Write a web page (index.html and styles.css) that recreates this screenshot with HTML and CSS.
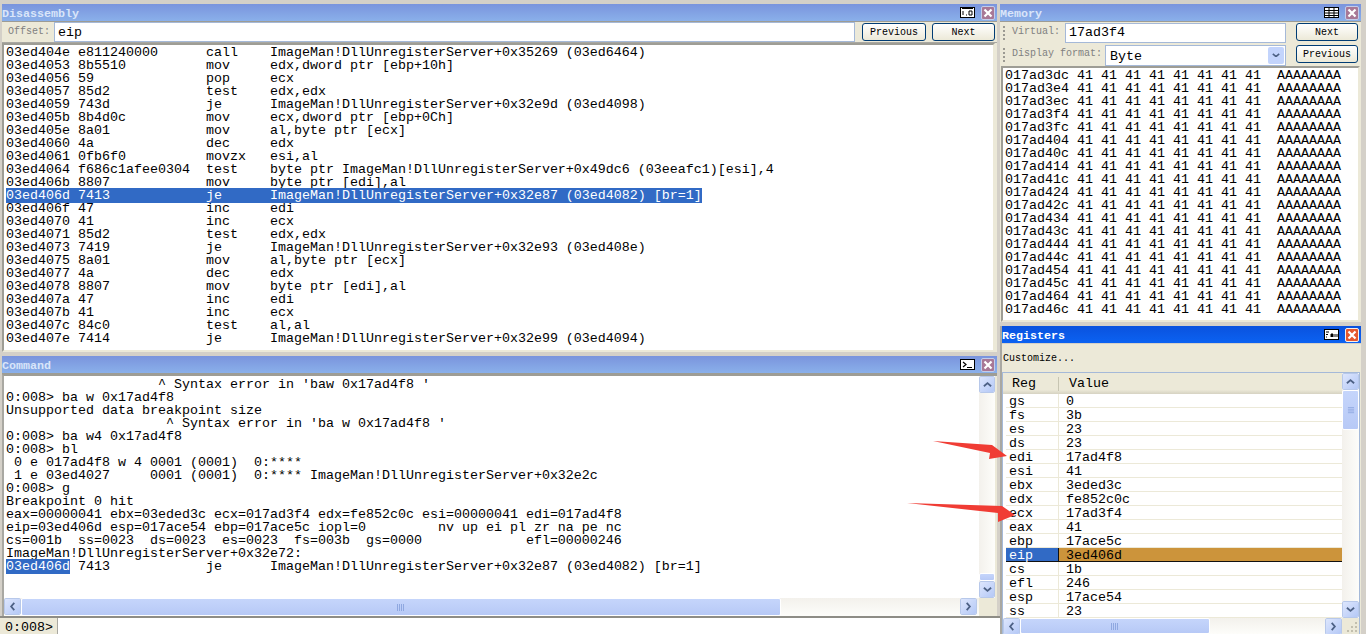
FILE: index.html
```html
<!DOCTYPE html>
<html lang="en">
<head>
<meta charset="utf-8">
<title>WinDbg</title>
<link rel="stylesheet" href="styles.css">
</head>
<body>
<div class="app">
  <div class="col col-left">
    <section class="panel panel-dis">
      <header class="title"><span>Disassembly</span><svg class="ico" viewBox="0 0 15 11"><rect x=".5" y=".5" width="14" height="10" fill="#fff" stroke="#000"/><path d="M2 1.5h11M3 4v4M6 8h1M9 4h3v4H9z" stroke="#000" fill="none"/></svg><b class="close inactive"><svg viewBox="0 0 10 10"><path d="M1.5 1.5l7 7M8.5 1.5l-7 7" stroke="#fff" stroke-width="2.2"/></svg></b></header>
      <div class="bar">
        <label class="lbl lbl-off">Offset:</label>
        <div class="field field-dis">eip</div>
        <button class="btn btn-prev">Previous</button>
        <button class="btn btn-next">Next</button>
      </div>
      <pre class="view view-dis">03ed404e e811240000      call    ImageMan!DllUnregisterServer+0x35269 (03ed6464)
03ed4053 8b5510          mov     edx,dword ptr [ebp+10h]
03ed4056 59              pop     ecx
03ed4057 85d2            test    edx,edx
03ed4059 743d            je      ImageMan!DllUnregisterServer+0x32e9d (03ed4098)
03ed405b 8b4d0c          mov     ecx,dword ptr [ebp+0Ch]
03ed405e 8a01            mov     al,byte ptr [ecx]
03ed4060 4a              dec     edx
03ed4061 0fb6f0          movzx   esi,al
03ed4064 f686c1afee0304  test    byte ptr ImageMan!DllUnregisterServer+0x49dc6 (03eeafc1)[esi],4
03ed406b 8807            mov     byte ptr [edi],al
<span class="sel">03ed406d 7413            je      ImageMan!DllUnregisterServer+0x32e87 (03ed4082) [br=1]</span>
03ed406f 47              inc     edi
03ed4070 41              inc     ecx
03ed4071 85d2            test    edx,edx
03ed4073 7419            je      ImageMan!DllUnregisterServer+0x32e93 (03ed408e)
03ed4075 8a01            mov     al,byte ptr [ecx]
03ed4077 4a              dec     edx
03ed4078 8807            mov     byte ptr [edi],al
03ed407a 47              inc     edi
03ed407b 41              inc     ecx
03ed407c 84c0            test    al,al
03ed407e 7414            je      ImageMan!DllUnregisterServer+0x32e99 (03ed4094)</pre>
    </section>
    <section class="panel panel-cmd">
      <header class="title"><span>Command</span><svg class="ico" viewBox="0 0 15 11"><rect x=".5" y=".5" width="14" height="10" fill="#fff" stroke="#000" stroke-width="1"/><path d="M3 3l3 2.5L3 8M7 8.5h5" stroke="#000" stroke-width="1.2" fill="none"/></svg><b class="close inactive"><svg viewBox="0 0 10 10"><path d="M1.5 1.5l7 7M8.5 1.5l-7 7" stroke="#fff" stroke-width="2.2"/></svg></b></header>
      <div class="cmd-body">
        <pre class="view view-cmd">                   ^ Syntax error in 'baw 0x17ad4f8 '
0:008&gt; ba w 0x17ad4f8
Unsupported data breakpoint size
                    ^ Syntax error in 'ba w 0x17ad4f8 '
0:008&gt; ba w4 0x17ad4f8
0:008&gt; bl
 0 e 017ad4f8 w 4 0001 (0001)  0:****
 1 e 03ed4027     0001 (0001)  0:**** ImageMan!DllUnregisterServer+0x32e2c
0:008&gt; g
Breakpoint 0 hit
eax=00000041 ebx=03eded3c ecx=017ad3f4 edx=fe852c0c esi=00000041 edi=017ad4f8
eip=03ed406d esp=017ace54 ebp=017ace5c iopl=0         nv up ei pl zr na pe nc
cs=001b  ss=0023  ds=0023  es=0023  fs=003b  gs=0000             efl=00000246
ImageMan!DllUnregisterServer+0x32e72:
<span class="sel">03ed406d</span> 7413            je      ImageMan!DllUnregisterServer+0x32e87 (03ed4082) [br=1]</pre>
        <div class="vscroll vscroll-cmd">
          <i class="sb up"><svg viewBox="0 0 10 6"><path d="M1 5l4-3.5L9 5" fill="none" stroke="#4d6185" stroke-width="2"/></svg></i>
          <i class="track"></i>
          <i class="thumb-v thumb-mini"></i>
          <i class="sb"><svg viewBox="0 0 10 6"><path d="M1 1l4 3.500L9 1" fill="none" stroke="#4d6185" stroke-width="2"/></svg></i>
        </div>
        <div class="hscroll hscroll-cmd">
          <i class="sb"><svg viewBox="0 0 6 10"><path d="M5 1L1.500 5 5 9" fill="none" stroke="#4d6185" stroke-width="2"/></svg></i>
          <i class="thumb-h thumb-cmd"><svg viewBox="0 0 8 7" class="grip"><path d="M.5 0v7M2.500 0v7M4.500 0v7M6.500 0v7" stroke="#8fa8e0"/></svg></i>
          <i class="track"></i>
          <i class="sb"><svg viewBox="0 0 6 10"><path d="M1 1l3.500 4L1 9" fill="none" stroke="#4d6185" stroke-width="2"/></svg></i>
        </div>
        <i class="corner"></i>
      </div>
      <div class="prompt"><span class="prompt-lbl">0:008&gt;</span><div class="prompt-in"></div></div>
    </section>
  </div>

  <div class="col col-right">
    <section class="panel panel-mem">
      <header class="title"><span>Memory</span><svg class="ico" viewBox="0 0 15 11"><rect x=".5" y=".5" width="14" height="10" fill="#fff" stroke="#000"/><path d="M1 3.500h13M1 6h13M1 8.500h13M5 1v9M10 1v9" stroke="#000"/></svg><b class="close inactive"><svg viewBox="0 0 10 10"><path d="M1.500 1.500l7 7M8.500 1.500l-7 7" stroke="#fff" stroke-width="2.200"/></svg></b></header>
      <div class="bar bar-mem">
        <i class="gripper"></i><label class="lbl lbl-virt">Virtual:</label>
        <div class="field field-mem">17ad3f4</div>
        <button class="btn btn-mem">Next</button>
      </div>
      <div class="bar bar-mem">
        <i class="gripper"></i><label class="lbl lbl-fmt">Display format:</label>
        <div class="field field-sel">Byte<i class="dd"><svg viewBox="0 0 10 6"><path d="M1 1l4 3.500L9 1" fill="none" stroke="#4d6185" stroke-width="2"/></svg></i></div>
        <button class="btn btn-mem">Previous</button>
      </div>
      <pre class="view view-mem">017ad3dc 41 41 41 41 41 41 41 41  AAAAAAAA
017ad3e4 41 41 41 41 41 41 41 41  AAAAAAAA
017ad3ec 41 41 41 41 41 41 41 41  AAAAAAAA
017ad3f4 41 41 41 41 41 41 41 41  AAAAAAAA
017ad3fc 41 41 41 41 41 41 41 41  AAAAAAAA
017ad404 41 41 41 41 41 41 41 41  AAAAAAAA
017ad40c 41 41 41 41 41 41 41 41  AAAAAAAA
017ad414 41 41 41 41 41 41 41 41  AAAAAAAA
017ad41c 41 41 41 41 41 41 41 41  AAAAAAAA
017ad424 41 41 41 41 41 41 41 41  AAAAAAAA
017ad42c 41 41 41 41 41 41 41 41  AAAAAAAA
017ad434 41 41 41 41 41 41 41 41  AAAAAAAA
017ad43c 41 41 41 41 41 41 41 41  AAAAAAAA
017ad444 41 41 41 41 41 41 41 41  AAAAAAAA
017ad44c 41 41 41 41 41 41 41 41  AAAAAAAA
017ad454 41 41 41 41 41 41 41 41  AAAAAAAA
017ad45c 41 41 41 41 41 41 41 41  AAAAAAAA
017ad464 41 41 41 41 41 41 41 41  AAAAAAAA
017ad46c 41 41 41 41 41 41 41 41  AAAAAAAA</pre>
    </section>
    <section class="panel panel-reg">
      <header class="title title-active"><span>Registers</span><svg class="ico" viewBox="0 0 15 11"><rect x=".5" y=".5" width="14" height="10" fill="#fff" stroke="#000"/><path d="M2 3h3M2 5.500h2M2 8h1M7 8V5h2v3M11 5v3M13 5v3" stroke="#000"/></svg><b class="close"><svg viewBox="0 0 10 10"><path d="M1.500 1.500l7 7M8.500 1.500l-7 7" stroke="#fff" stroke-width="2.200"/></svg></b></header>
      <div class="customize">Customize...</div>
      <div class="reg-box">
        <div class="reg-table">
          <div class="reg-head"><span class="rh-reg">Reg</span><span class="rh-val">Value</span></div>
          <div class="reg-row"><span>gs</span><span>0</span></div>
          <div class="reg-row"><span>fs</span><span>3b</span></div>
          <div class="reg-row"><span>es</span><span>23</span></div>
          <div class="reg-row"><span>ds</span><span>23</span></div>
          <div class="reg-row"><span>edi</span><span>17ad4f8</span></div>
          <div class="reg-row"><span>esi</span><span>41</span></div>
          <div class="reg-row"><span>ebx</span><span>3eded3c</span></div>
          <div class="reg-row"><span>edx</span><span>fe852c0c</span></div>
          <div class="reg-row"><span>ecx</span><span>17ad3f4</span></div>
          <div class="reg-row"><span>eax</span><span>41</span></div>
          <div class="reg-row"><span>ebp</span><span>17ace5c</span></div>
          <div class="reg-row reg-cur"><span>eip</span><span>3ed406d</span></div>
          <div class="reg-row"><span>cs</span><span>1b</span></div>
          <div class="reg-row"><span>efl</span><span>246</span></div>
          <div class="reg-row"><span>esp</span><span>17ace54</span></div>
          <div class="reg-row"><span>ss</span><span>23</span></div>
        </div>
        <div class="vscroll vscroll-reg">
          <i class="sb up"><svg viewBox="0 0 10 6"><path d="M1 5l4-3.500L9 5" fill="none" stroke="#4d6185" stroke-width="2"/></svg></i>
          <i class="thumb-v thumb-reg"><svg viewBox="0 0 7 8" class="grip"><path d="M0 .5h7M0 2.500h7M0 4.500h7M0 6.500h7" stroke="#8fa8e0"/></svg></i>
          <i class="track"></i>
          <i class="sb"><svg viewBox="0 0 10 6"><path d="M1 1l4 3.500L9 1" fill="none" stroke="#4d6185" stroke-width="2"/></svg></i>
        </div>
        <div class="hscroll hscroll-reg">
          <i class="sb"><svg viewBox="0 0 6 10"><path d="M5 1L1.500 5 5 9" fill="none" stroke="#4d6185" stroke-width="2"/></svg></i>
          <i class="thumb-h thumb-rh"><svg viewBox="0 0 8 7" class="grip"><path d="M.5 0v7M2.500 0v7M4.500 0v7M6.500 0v7" stroke="#8fa8e0"/></svg></i>
          <i class="track"></i>
          <i class="sb"><svg viewBox="0 0 6 10"><path d="M1 1l3.500 4L1 9" fill="none" stroke="#4d6185" stroke-width="2"/></svg></i>
        </div>
        <i class="corner corner-grip"><svg viewBox="0 0 12 12"><path d="M9 1h2v2H9zM5 5h2v2H5zM9 5h2v2H9zM1 9h2v2H1zM5 9h2v2H5zM9 9h2v2H9z" fill="#c2bfae"/></svg></i>
      </div>
    </section>
  </div>
</div>
<svg class="arrows" viewBox="0 0 1366 634" aria-hidden="true">
  <path d="M933 441L992 445 1007 456 989 459 990 453z" fill="#f03c34"/>
  <path d="M907 503L1002 506 1015 515 998 522 998 513z" fill="#f03c34"/>
</svg>
</body>
</html>
```
FILE: styles.css
```css
* { box-sizing: border-box; }
html, body { margin: 0; height: 634px; overflow: hidden; }
body { background: #d4d0c8; font: 13.33px/13px "Liberation Mono", "DejaVu Sans Mono", monospace; color: #000; position: relative; }
.app { display: grid; grid-template-columns: 1000px 366px; height: 634px; }
.col { display: flex; flex-direction: column; min-width: 0; }
.col-left { padding: 4px 3px 0 2px; }
.col-right { padding: 4px 5px 0 0; }
.panel { display: flex; flex-direction: column; min-height: 0; background: #ece9d8; }
.panel-dis { height: 348px; }
.panel-cmd { height: 278px; margin: 4px 0 0 -2px; flex: none; padding-left: 2px; background: #d4d0c8; }
.panel-mem { height: 318px; }
.panel-reg { flex: 1; margin-top: 4px; border-left: 2px solid #a9a8a2; }

.title { flex: none; height: 18px; display: flex; align-items: center; gap: 3px; padding-right: 2px; color: #d9e5f9; font: bold 11.67px/18px "Liberation Mono", monospace; background: linear-gradient(#7a94dd, #8ab0ea); border-bottom: 1px solid #9d9c94; }
.title > span { flex: 1; padding-top: 2px; }
.title-active { background: linear-gradient(#0a52de, #0b62f2); color: #fff; border-bottom: 1px solid #d4d0c8; }
.ico { width: 15px; height: 11px; flex: none; margin-right: 3px; }
.close { width: 14px; height: 14px; flex: none; display: flex; align-items: center; justify-content: center; background: #e5582f; border: 1px solid #f5f0ee; border-radius: 2px; }
.close.inactive { background: #a87896; border-color: #c3cdea; }
.close svg { width: 10px; height: 10px; }

.bar { flex: none; height: 21px; display: flex; align-items: center; background: #ece9d8; border-bottom: 1px solid #a9a8a2; }
.lbl { color: #808080; font-size: 10px; line-height: 20px; padding-left: 6px; flex: none; }
.lbl-off { width: 52px; }
.field { height: 20px; background: #fff; border: 1px solid #a5b9d8; font-size: 13.33px; line-height: 18px; padding-left: 3px; flex: 1; min-width: 0; }
.field-dis { padding-top: 1px; }
.btn { height: 18px; padding: 1px 0 0; margin: 0 0 0 3px; font: 10px/14px "Liberation Mono", monospace; color: #000; background: linear-gradient(#fff, #ece9d8); border: 1px solid #003c74; border-radius: 3px; flex: none; }
.btn-prev { width: 64px; margin-left: 7px; }
.btn-next { width: 63px; margin-left: 6px; margin-right: 2px; }

.bar-mem { height: 22px; border-bottom: 0; }
.bar-mem .lbl { margin-top: -2px; }
.gripper { width: 2px; height: 15px; margin-left: 3px; flex: none; background: repeating-linear-gradient(#9b9a92 0 2px, transparent 2px 4px); }
.lbl-virt { width: 60px; padding-left: 7px; }
.lbl-fmt { width: 100px; padding-left: 7px; }
.field-mem, .field-sel { flex: 1; }
.field-sel { position: relative; height: 21px; line-height: 21px; padding-left: 4px; }
.dd { position: absolute; right: 1px; top: 1px; width: 16px; height: 17px; display: flex; align-items: center; justify-content: center; background: #c3d4fc; border-radius: 2px; }
.dd svg { width: 8px; }
.btn-mem { width: 62px; margin: 1px 3px 0 10px; align-self: flex-start; }

.view { margin: 0; background: #fff; font: 13.33px/13px "Liberation Mono", monospace; overflow: hidden; border-style: solid; border-width: 2px; border-color: #9e9d95 #ece9d8 #ece9d8 #9e9d95; }
.view-dis { flex: 1; padding: 1px 0 0 2px; margin-right: 2px; }
.view-mem { flex: 1; padding: 1px 0 0 2px; margin: 0 1px 0 1px; }
.sel { background: #316ac5; color: #fff; }

.cmd-body { flex: none; height: 242px; display: grid; grid-template-columns: 1fr 16px; grid-template-rows: 1fr 18px; background: #ece9d8; padding: 0 2px 0 0; border-left: 2px solid #a9a8a2; border-top: 2px solid #9e9d95; }
.view-cmd { border: 0; padding: 2px 0 0 2px; grid-column: 1; grid-row: 1; }
.vscroll { display: flex; flex-direction: column; background: linear-gradient(90deg, #f3f1ec, #fdfdfa); }
.hscroll { display: flex; background: linear-gradient(#f3f1ec, #fdfdfa); }
.vscroll-cmd { grid-column: 2; grid-row: 1; }
.vscroll-cmd .sb { width: 16px; }
.hscroll-cmd { grid-column: 1; grid-row: 2; padding-right: 2px; }
.corner { background: #ece9d8; display: block; }
.corner-grip svg { display: block; width: 12px; height: 12px; margin: 3px 0 0 4px; }
.sb { flex: none; width: 17px; height: 17px; display: flex; align-items: center; justify-content: center; background: linear-gradient(135deg, #dde6fd, #b4c8f6); border: 1px solid #fff; outline: 1px solid #b7c8ea; outline-offset: -1px; border-radius: 2px; }
.sb svg { width: 9px; height: 9px; }
.track { flex: 1; display: block; }
.thumb-v, .thumb-h { display: flex; align-items: center; justify-content: center; flex: none; background: linear-gradient(#c5d5fb, #b7c9f6); border: 1px solid #fff; border-radius: 2px; }
.thumb-mini { height: 8px; }
.thumb-cmd { width: 760px; }
.thumb-reg { height: 40px; }
.thumb-rh { width: 190px; }
.grip { width: 8px; height: 7px; }

.prompt { flex: none; height: 18px; display: flex; border-top: 2px solid #8e8d86; background: #ece9d8; margin-left: -2px; margin-right: -3px; }
.prompt-lbl { width: 58px; padding: 3px 0 0 5px; flex: none; line-height: 13px; border-right: 1px solid #a9a8a2; }
.prompt-in { flex: 1; background: #fff; }

.customize { flex: none; height: 28px; padding: 8px 0 0 1px; font-size: 10px; line-height: 14px; background: #ece9d8; }
.reg-box { flex: 1; min-height: 0; display: grid; grid-template-columns: 1fr 17px; grid-template-rows: 245px 16px; border: 1px solid #a5b9d8; border-bottom: 0; margin-right: 1px; background: #fff; }
.reg-table { overflow: hidden; }
.reg-head { height: 21px; padding-top: 1px; display: grid; grid-template-columns: 55px 1fr; align-items: center; background: linear-gradient(#ece9d8 80%, #d6d2c2); line-height: 16px; }
.rh-reg { padding-left: 9px; }
.rh-val { padding-left: 10px; border-left: 1px solid #c7c5b2; line-height: 14px; }
.reg-row { height: 14px; margin-left: 3px; display: grid; grid-template-columns: 52px 1fr; grid-template-rows: 13px; border-bottom: 1px solid #ece9d8; }
.reg-row > span { height: 13px; padding: 1px 0 0 3px; line-height: 13px; white-space: pre; }
.reg-row > span + span { padding-left: 7px; border-left: 1px solid #ece9d8; }
.reg-cur { border-bottom: 1px solid #111; }
.reg-cur > span { background: #316ac5; color: #fff; }
.reg-cur > span + span { background: #cc943b; color: #000; border-left: 1px solid #111; }
.vscroll-reg { grid-column: 2; grid-row: 1; }
.hscroll-reg { grid-column: 1; grid-row: 2; }

.arrows { position: absolute; left: 0; top: 0; width: 1366px; height: 634px; pointer-events: none; }
```
